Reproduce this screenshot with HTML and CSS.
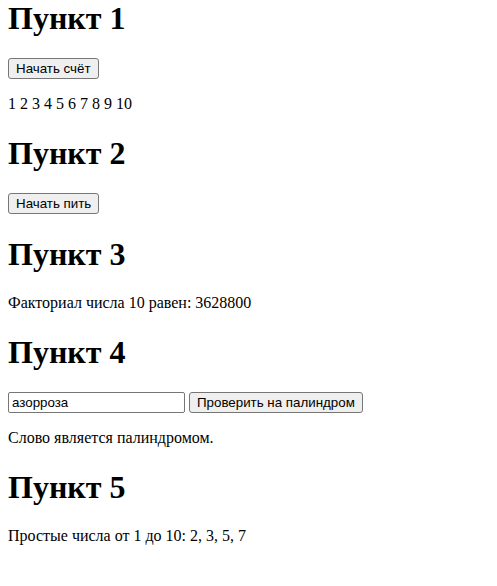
FILE: index.html
```html
<!DOCTYPE html>
<html lang="ru">
<head>
<meta charset="utf-8">
<title>Пункты</title>
<link rel="stylesheet" href="styles.css">
</head>
<body>
<h1 class="title first">Пункт 1</h1>
<button class="btn">Начать счёт</button>
<p class="text">1 2 3 4 5 6 7 8 9 10</p>
<h1 class="title">Пункт 2</h1>
<button class="btn">Начать пить</button>
<h1 class="title">Пункт 3</h1>
<p class="text">Факториал числа 10 равен: 3628800</p>
<h1 class="title">Пункт 4</h1>
<div class="row"><input class="field" type="text" value="азорроза"> <button class="btn">Проверить на палиндром</button></div>
<p class="text">Слово является палиндромом.</p>
<h1 class="title">Пункт 5</h1>
<p class="text">Простые числа от 1 до 10: 2, 3, 5, 7</p>
</body>
</html>
```
FILE: styles.css
```css
html { background: #fff; }
body {
  margin: 0 8px 8px;
  font-family: "Liberation Serif", "Times New Roman", serif;
  font-size: 16px;
  color: #000;
}
.title {
  font-size: 32px;
  font-weight: bold;
  margin: 21.44px 0;
}
.title.first { margin-top: 0; }
.text { margin: 16px 0; }
.btn {
  box-sizing: border-box;
  height: 21px;
  font-family: "Liberation Sans", Arial, sans-serif;
  font-size: 13.333px;
  color: #000;
  background: #efefef;
  border: 1px solid #767676;
  border-radius: 3px;
  padding: 0 7px;
  margin: 0;
}
.field {
  box-sizing: border-box;
  height: 21px;
  font-family: "Liberation Sans", Arial, sans-serif;
  font-size: 13.333px;
  border: 1px solid #767676;
  border-radius: 2px;
  padding: 1px 3px;
  margin: 0;
  width: 177px;
}
```
